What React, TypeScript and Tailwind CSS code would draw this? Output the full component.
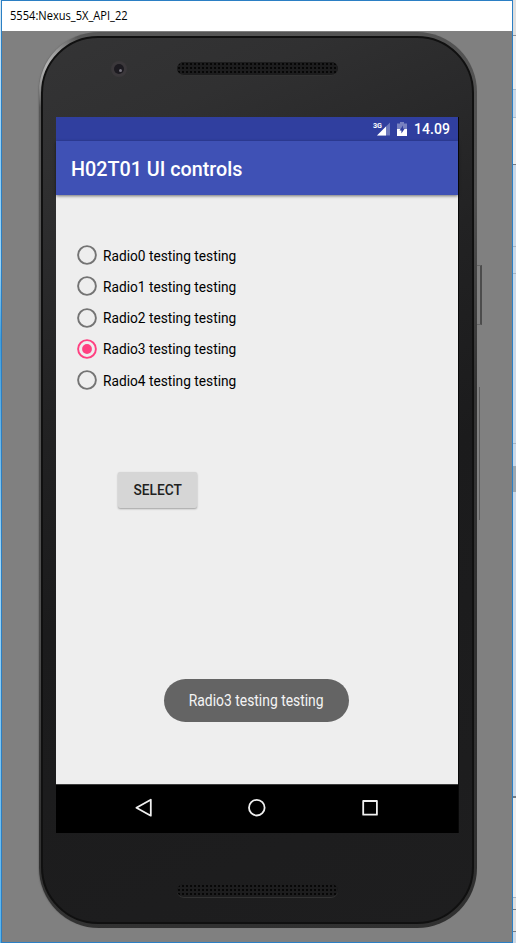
import React from "react";

const options = [0, 1, 2, 3, 4];
const selected = 3;

function Speaker() {
  return (
    <div className="h-[14px] w-[161px] rounded-full border-b border-[#333333] bg-[#131313] bg-[radial-gradient(circle,#070707_0.7px,#1d1d1e_1.5px)] bg-[length:4px_4px]" />
  );
}

function StatusBar() {
  return (
    <div className="flex h-6 items-center justify-end bg-[#303f9f] pr-[8px]">
      <svg width="18" height="16" viewBox="0 0 18 16" className="mr-[7px]">
        <path d="M18 1.5v13H5z" fill="#fff" fillOpacity=".3" />
        <path d="M14 5.5v9H5z" fill="#fff" />
        <text x="1" y="7.4" fontSize="8" fontWeight="700" fontFamily="Roboto, sans-serif" fill="#fff" textLength="9" lengthAdjust="spacingAndGlyphs">3G</text>
      </svg>
      <svg width="10" height="14" viewBox="0 0 10 14" className="mr-[7px]">
        <path d="M3 0h4v1.5h3V7H0V1.5h3z" fill="#fff" fillOpacity=".35" />
        <path d="M0 7h10v7H0z" fill="#fff" />
        <path d="M6 3.5 2.5 8.4h1.9v3.2l3.4-5H6z" fill="#303f9f" />
      </svg>
      <span className="font-['Roboto',sans-serif] text-[14px] leading-6 font-medium tracking-[0.05px] text-white">14.09</span>
    </div>
  );
}

function RadioOption({ index }: { index: number }) {
  const on = index === selected;
  return (
    <div className="flex h-[31.3px] items-center">
      <svg width="20" height="20" viewBox="0 0 20 20">
        <circle cx="10" cy="10" r="8.9" fill="none" stroke={on ? "#ff4081" : "#747474"} strokeWidth="1.9" />
        {on && <circle cx="10" cy="10" r="4.9" fill="#ff4081" />}
      </svg>
      <span className="mt-px ml-[5.6px] inline-block origin-left scale-x-[0.98] text-[14px] leading-4 whitespace-nowrap text-black">Radio{index} testing testing</span>
    </div>
  );
}

function NavBar() {
  return (
    <div className="flex h-[49px] items-center justify-between border-t border-[#3c3c3c] bg-black pr-[78px] pb-[2px] pl-[78px]">
      <svg width="20" height="20" viewBox="0 0 20 20" fill="none" stroke="#f0f0f0" strokeWidth="1.8" strokeLinejoin="round">
        <path d="M16.8 1.7v16L2.4 9.7z" />
      </svg>
      <svg width="20" height="20" viewBox="0 0 20 20" fill="none" stroke="#f0f0f0" strokeWidth="1.8">
        <circle cx="9.8" cy="9.7" r="7.8" />
      </svg>
      <svg width="20" height="20" viewBox="0 0 20 20" fill="none" stroke="#f0f0f0" strokeWidth="1.8" strokeLinejoin="round">
        <rect x="3.2" y="3" width="13.7" height="13.7" />
      </svg>
    </div>
  );
}

function Screen() {
  return (
    <div className="ml-[13px] flex h-[716px] w-[402px] flex-col bg-[#eeeeee] font-['Roboto',sans-serif] shadow-[1px_0_0_#080808]">
      <StatusBar />
      <div className="flex h-[54px] items-center bg-[#3f51b5] pt-[4px] pl-[15px] text-[19.75px] font-medium text-white shadow-[0_1px_3px_#0008]">
        H02T01 UI controls
      </div>
      <div className="flex flex-1 flex-col items-start">
        <div className="mt-[44.4px] ml-[21px]">
          {options.map((n) => <RadioOption key={n} index={n} />)}
        </div>
        <button className="mt-[76.1px] ml-[62px] h-[36px] w-[79px] rounded-[2px] bg-[#d6d6d6] pt-px text-[14px] font-medium text-[#212121] shadow-[0_1px_2px_#0005]">
          <span className="inline-block scale-x-[0.98]">SELECT</span>
        </button>
        <div className="mt-[171px] ml-[108px] flex h-[43px] w-[185px] items-center justify-center rounded-full bg-[#646464] pt-px">
          <span className="inline-block scale-x-[0.885] text-[15.7px] whitespace-nowrap text-[#f4f4f4]">Radio3 testing testing</span>
        </div>
      </div>
      <NavBar />
    </div>
  );
}

function Phone() {
  return (
    <div className="relative mt-px ml-[37px] h-[896px] w-[438px] rounded-[60px] bg-[radial-gradient(circle_at_8px_34px,#b4b4b4_0px,#9a9a9a_18px,transparent_42px),linear-gradient(135deg,#585858_0%,#505050_45%,#323232_60%,#303030_100%)] pt-[4px] pl-[2px] shadow-[-1px_0_1px_#6669]">
      <div className="absolute top-[233px] left-[438px] h-[60px] w-[5px] border-t border-r-2 border-b border-t-[#666] border-r-[#4c4c4c] border-b-[#666]" />
      <div className="absolute top-[355px] left-[438px] h-[133px] w-[3px] border-r border-[#5c5c5c]" />
      <div className="h-[888px] w-[433px] rounded-[57px] border-2 border-[#101010] bg-[linear-gradient(155deg,#343435_0%,#303031_12%,#222223_35%,#1b1b1c_55%,#1e1e1f_100%)]">
        <div className="flex h-[79px] items-start pt-[23px] pl-[68px]">
          <div className="flex h-[16px] w-[16px] items-center justify-center rounded-full bg-[#3b383b]">
            <div className="flex h-[10px] w-[10px] items-center justify-center rounded-full bg-[#1c1a20]">
              <div className="mt-[3px] ml-[3px] h-[3px] w-[3px] rounded-full bg-[#77747e]" />
            </div>
          </div>
          <div className="mt-px ml-[50px]"><Speaker /></div>
        </div>
        <Screen />
        <div className="mt-[51px] ml-[134px]"><Speaker /></div>
      </div>
    </div>
  );
}

export default function App() {
  return (
    <div className="flex h-[943px] w-[516px] overflow-hidden">
      <div className="w-px bg-[linear-gradient(#d8e9f4_0%,#8bcdf4_17%,#9bd5f5_28%,#409edb_36%,#a1d7f5_60%,#58b4ed_100%)]" />
      <div className="flex w-[512px] flex-col border border-[#2b7fc4] bg-[#808080]">
        <div className="flex h-[30px] items-center bg-white pl-[8px]">
          <span className="origin-left scale-x-[0.925] font-['Open_Sans','Noto_Sans',sans-serif] text-[12px] leading-[16px] whitespace-nowrap text-black">5554:Nexus_5X_API_22</span>
        </div>
        <Phone />
      </div>
      <div className="flex w-[3px] flex-col bg-[#cbd9e8]">
        <div className="h-[36px] border-b border-[#8c9299] bg-[#e0e0e0]" />
        <div className="h-[54px] border-b border-[#a9bdcf] bg-[#eeeeee]" />
        <div className="h-[28px] border-b border-[#a9bdcf]" />
        <div className="h-[47px] border-b border-[#777d84] bg-[#eeeeee]" />
        <div className="h-[82px] border-b border-[#a8b5c3]" />
        <div className="h-[27px] border-b border-[#a8b5c3]" />
        <div className="h-[170px] border-b border-[#a8b5c3]" />
        <div className="mt-[22px] h-[26px] bg-[#9da8b1]" />
        <div className="h-[306px] border-b-2 border-[#777d84]" />
        <div className="h-[100px] border-b border-[#a8b5c3] bg-[#eeeeee]" />
        <div className="h-[12px] border-b border-[#777d84] bg-[#e0e0e0]" />
        <div className="h-[22px] border-b border-[#777d84] bg-[#e0e0e0]" />
      </div>
    </div>
  );
}
